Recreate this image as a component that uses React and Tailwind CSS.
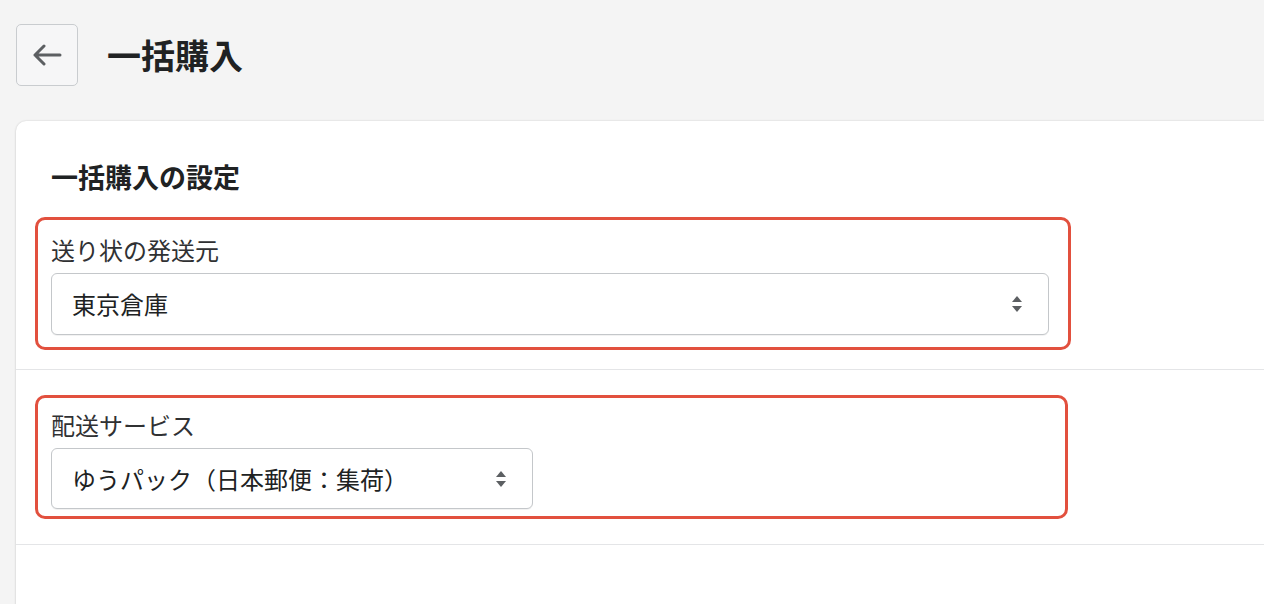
import React from "react";

function SelectArrows() {
  return (
    <svg width="12" height="18" viewBox="0 0 12 18" className="shrink-0">
      <path d="M6 1 L11 7 H1 Z" fill="#5c5f62" />
      <path d="M6 17 L11 11 H1 Z" fill="#5c5f62" />
    </svg>
  );
}

export default function App() {
  return (
    <div
      className="min-h-[604px] w-[1264px] overflow-hidden bg-[#f4f4f4] pl-4 pt-6 text-[#202223]"
      style={{ fontFamily: '"Noto Sans CJK JP", "Noto Sans", sans-serif' }}
    >
      <div className="flex items-center gap-[29px]">
        <button className="flex h-[62px] w-[62px] items-center justify-center rounded-[5px] border border-[#c9cccf] bg-[#f6f6f7]">
          <svg width="30" height="22" viewBox="0 0 30 22" fill="none">
            <path
              d="M28 11 H3 M12 2 L3 11 L12 20"
              stroke="#5c5f62"
              strokeWidth="3"
              strokeLinecap="round"
              strokeLinejoin="round"
            />
          </svg>
        </button>
        <h1 className="text-[34px] font-bold leading-none text-[#202223]">一括購入</h1>
      </div>

      <div className="mt-[35px] w-[1300px] rounded-tl-[10px] bg-white shadow-[0_0_2px_rgba(0,0,0,0.15),0_1px_3px_rgba(0,0,0,0.08)]">
        <div className="border-b border-[#e4e5e7] pb-[19px] pl-[19px] pt-[36px]">
          <h2 className="pl-[16px] text-[27px] font-bold leading-[40px] text-[#202223]">一括購入の設定</h2>
          <div className="mt-[20px] w-[1036px] rounded-[10px] border-[3px] border-[#e2503e] px-[13px] pb-[12px] pt-[14px]">
            <div className="text-[24px] leading-[32px] text-[#303133]">送り状の発送元</div>
            <div className="mt-[7px] flex h-[62px] w-[998px] items-center justify-between rounded-[6px] border border-[#c4c7ca] bg-white pl-[20px] pr-[25px] shadow-[0_1px_0_rgba(0,0,0,0.05)]">
              <span className="text-[24px] leading-none text-[#202223]">東京倉庫</span>
              <SelectArrows />
            </div>
          </div>
        </div>

        <div className="border-b border-[#e4e5e7] pb-[25px] pl-[19px] pt-[25px]">
          <div className="w-[1033px] rounded-[10px] border-[3px] border-[#e2503e] px-[13px] pb-[7px] pt-[11px]">
            <div className="text-[24px] leading-[32px] text-[#303133]">配送サービス</div>
            <div className="mt-[7px] flex h-[61px] w-[482px] items-center justify-between rounded-[6px] border border-[#c4c7ca] bg-white pl-[20px] pr-[25px] shadow-[0_1px_0_rgba(0,0,0,0.05)]">
              <span className="text-[24px] leading-none text-[#202223]">ゆうパック（日本郵便：集荷）</span>
              <SelectArrows />
            </div>
          </div>
        </div>
        <div className="h-[80px]" />
      </div>
    </div>
  );
}
